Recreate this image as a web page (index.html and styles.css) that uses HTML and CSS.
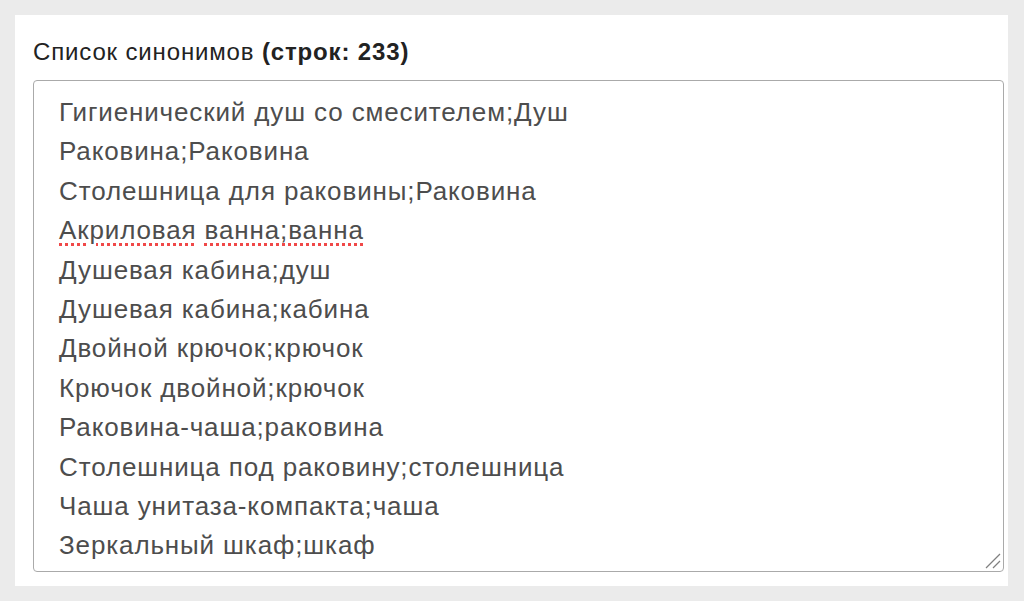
FILE: index.html
```html
<!DOCTYPE html>
<html lang="ru">
<head>
    <meta charset="UTF-8">
    <title>Список синонимов</title>
    <link rel="stylesheet" href="styles.css">
</head>
<body>
    <div class="panel">
        <label class="field-label">Список синонимов <b>(строк: 233)</b></label>
        <div class="synonyms" role="textbox" aria-multiline="true">
            <div class="line">Гигиенический душ со смесителем;Душ</div>
            <div class="line">Раковина;Раковина</div>
            <div class="line">Столешница для раковины;Раковина</div>
            <div class="line"><span class="misspelled">Акриловая</span> <span class="misspelled">ванна;ванна</span></div>
            <div class="line">Душевая кабина;душ</div>
            <div class="line">Душевая кабина;кабина</div>
            <div class="line">Двойной крючок;крючок</div>
            <div class="line">Крючок двойной;крючок</div>
            <div class="line">Раковина-чаша;раковина</div>
            <div class="line">Столешница под раковину;столешница</div>
            <div class="line">Чаша унитаза-компакта;чаша</div>
            <div class="line">Зеркальный шкаф;шкаф</div>
            <svg class="grip" width="16" height="16" viewBox="0 0 16 16">
                <line x1="1" y1="15" x2="15" y2="1" stroke="#808080" stroke-width="1.3"/>
                <line x1="8" y1="15" x2="15" y2="8" stroke="#808080" stroke-width="1.3"/>
            </svg>
        </div>
    </div>
</body>
</html>
```

FILE: styles.css
```css
body {
    margin: 0;
    padding: 15px 16px 15px 15px;
    background-color: #ebebeb;
    font-family: "Liberation Sans", Arial, sans-serif;
}

.panel {
    background-color: #fff;
    height: 571px;
    box-sizing: border-box;
    padding: 24px 4px 0 18px;
    display: flex;
    flex-direction: column;
    gap: 15px;
}

.field-label {
    font-size: 24px;
    line-height: 26px;
    letter-spacing: 0.85px;
    color: #222;
}

.synonyms {
    position: relative;
    height: 492px;
    box-sizing: border-box;
    overflow: hidden;
    border: 1px solid #aaa;
    border-radius: 4px;
    padding: 12px 24px 0 25px;
    font-size: 26px;
    line-height: 39.4px;
    letter-spacing: 0.87px;
    color: #4d4d4d;
}

.misspelled {
    text-decoration: underline dotted #f04848;
    text-decoration-thickness: 3px;
    text-underline-offset: 4px;
}

.grip {
    position: absolute;
    right: 2px;
    bottom: 2px;
}
```
